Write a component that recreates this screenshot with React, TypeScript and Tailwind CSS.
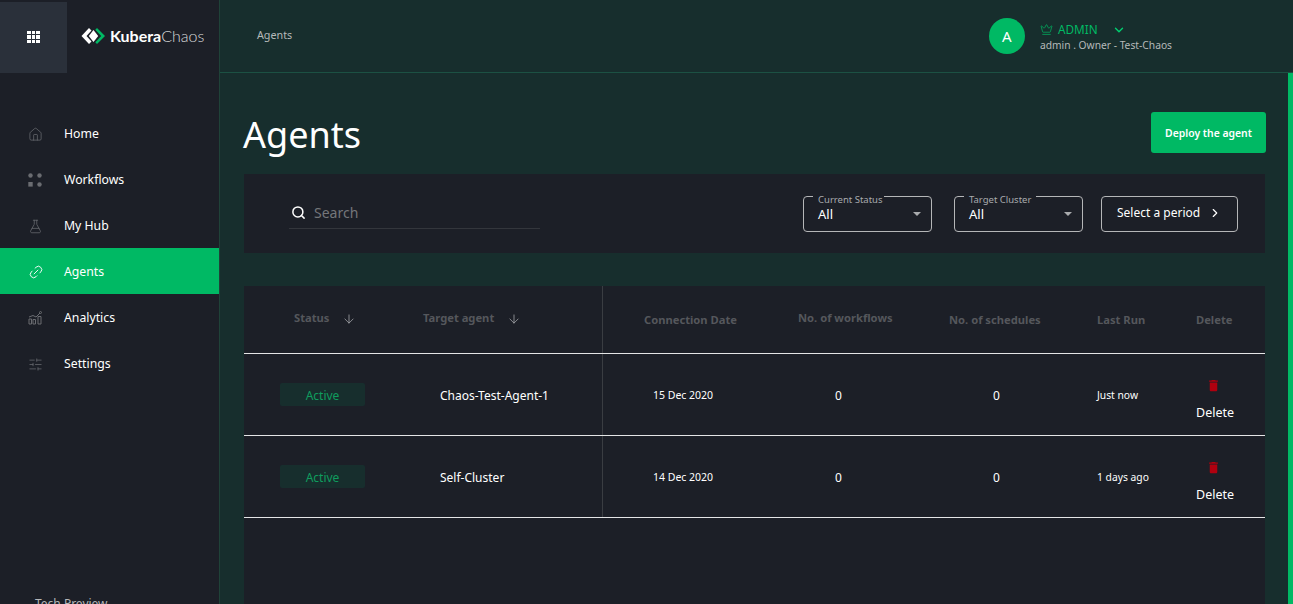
import { ArrowDown, ChevronDown, ChevronRight, Crown, FlaskConical, House, Link2, Search, SlidersHorizontal } from "lucide-react";
import { MdDelete } from "react-icons/md";

const font = { fontFamily: '"Noto Sans", sans-serif' };

function WorkflowsIcon() {
  return (
    <svg width="14" height="14" viewBox="0 0 14 14" fill="#6a6c71">
      <circle cx="2.5" cy="2.5" r="2.2" />
      <circle cx="11.5" cy="2.5" r="2.2" />
      <rect x="0.3" y="9" width="4.4" height="4.6" />
      <circle cx="11.5" cy="11.5" r="2.2" />
    </svg>
  );
}

function AnalyticsIcon() {
  return (
    <svg width="14" height="14" viewBox="0 0 14 14" fill="none" stroke="#6a6c71" strokeWidth="1">
      <path d="M1 13V8h2.5v5zM5 13V8.5h2.5V13zM10 13V5.5h3V13z" />
      <path d="M1 6l4-1.5L8 6l4-4" />
      <circle cx="12.5" cy="1.5" r="1" />
    </svg>
  );
}

function LogoMark() {
  return (
    <svg width="25" height="18" viewBox="0 0 25 18">
      <path d="M8 1 0.5 9 8 17l2.5-2.5L5.5 9l5-5.5z" fill="#fff" />
      <path d="M12.5 3 7.8 9l4.7 6 4.7-6z" fill="#fff" />
      <path d="M16 1l8 8-8 8-1.7-1.8L20.2 9l-5.9-6.2z" fill="#00b964" />
    </svg>
  );
}

const navItems = [
  { label: "Home", icon: <House size={15} color="#6a6c71" strokeWidth={1.2} /> },
  { label: "Workflows", icon: <WorkflowsIcon /> },
  { label: "My Hub", icon: <FlaskConical size={15} color="#6a6c71" strokeWidth={1.2} /> },
  { label: "Agents", icon: <Link2 size={16} color="#fff" strokeWidth={1.3} className="-rotate-45" />, active: true },
  { label: "Analytics", icon: <AnalyticsIcon /> },
  { label: "Settings", icon: <SlidersHorizontal size={15} color="#6a6c71" strokeWidth={1.2} /> },
];

const agents = [
  { name: "Chaos-Test-Agent-1", date: "15 Dec 2020", lastRun: "Just now" },
  { name: "Self-Cluster", date: "14 Dec 2020", lastRun: "1 days ago" },
];

const gridCols = "grid grid-cols-[160px_199px_165px_152px_155px_100px_1fr]";

function SelectBox({ label, notch }: { label: string; notch: string }) {
  return (
    <div className="relative w-[129px] h-[36px] border border-[#b5b6b8] rounded-[4px] pl-[14px] pr-[10px] pt-[8px] flex justify-between">
      <span className={`absolute top-[-1px] left-[9px] h-[2px] bg-[#1c1f27] ${notch}`} />
      <span className="absolute top-[-4px] left-[14px] text-[9.5px] leading-[14px] text-[#a9abae]">{label}</span>
      <span className="text-[13px] leading-[18px] text-white">All</span>
      <span className="mt-[7px] w-0 h-0 border-x-[4px] border-x-transparent border-t-[4px] border-t-[#a9abae]" />
    </div>
  );
}

export default function App() {
  return (
    <div style={font} className="flex h-[604px] overflow-hidden bg-[#172e2d]">
      {/* sidebar */}
      <aside className="w-[220px] shrink-0 h-full bg-[#1c1f27] border-r border-[#1f4238] flex flex-col overflow-hidden">
        <div className="flex items-center shrink-0 h-[71px] mt-[2px]">
          <div className="w-[67px] h-full bg-[#2a303a] flex items-center justify-center">
            <div className="grid grid-cols-3 gap-[1px] -mt-[1px]">
              {Array.from({ length: 9 }).map((_, i) => (
                <span key={i} className="w-[3.5px] h-[3.5px] bg-white" />
              ))}
            </div>
          </div>
          <div className="ml-[14px] -mt-[3px] flex items-center">
            <LogoMark />
            <span style={{ fontFamily: "Lato, sans-serif" }} className="ml-[4px] text-[16px] font-bold text-white">Kubera</span>
            <span style={{ fontFamily: "Lato, sans-serif" }} className="text-[16px] font-light text-[#d8d9da]">Chaos</span>
          </div>
        </div>
        <nav className="mt-[37px] shrink-0">
          {navItems.map((item) => (
            <div
              key={item.label}
              className={`flex items-center h-[46px] pl-[28px] pt-[2px] text-[12.25px] text-white ${item.active ? "bg-[#00b964]" : ""}`}
            >
              <span className="w-[36px] flex items-center">{item.icon}</span>
              {item.label}
            </div>
          ))}
        </nav>
        <div className="mt-[210px] shrink-0 pl-[35px] text-[12px] leading-[16px] text-[#b5b6b8] whitespace-nowrap">Tech Preview</div>
      </aside>

      <div className="flex-1 flex flex-col min-w-0">
        {/* top bar */}
        <header className="h-[73px] shrink-0 border-b border-[#1c5143] flex items-center pl-[37px] pr-[121px] justify-between">
          <span className="text-[10.75px] mb-[2px] text-[#b5b9b9]">Agents</span>
          <div className="flex items-center">
            <div className="w-[36px] h-[36px] rounded-full bg-[#00b964] flex items-center justify-center text-white text-[15px]">A</div>
            <div className="ml-[15px] mt-[2px]">
              <div className="flex items-center text-[11.75px] leading-[17px] text-[#00b964]">
                <Crown size={13} strokeWidth={1.3} />
                <span className="ml-[5px]">ADMIN</span>
                <ChevronDown size={14} strokeWidth={2.4} className="ml-[14px] text-[#00d070]" />
              </div>
              <div className="text-[10.25px] leading-[15px] text-[#b5b9b9]">admin . Owner - Test-Chaos</div>
            </div>
          </div>
        </header>

        <div className="flex flex-1 min-h-0">
          <main className="flex-1 min-w-0 pl-[24px] pr-[23px]">
            <div className="flex items-start justify-between pt-[39px]">
              <h1 className="text-[36px] leading-[45px] text-white -ml-[1px]">Agents</h1>
              <button className="w-[115px] h-[41px] -mr-[1px] pt-[2px] bg-[#00b964] rounded-[3px] text-white text-[10.4px] font-semibold">Deploy the agent</button>
            </div>

            {/* filters */}
            <section className="mt-[17px] h-[79px] bg-[#1c1f27] flex items-center pl-[45px] pr-[27px]">
              <div className="w-[251px] h-[33px] mt-[-3px] border-b border-[#33363c] flex items-center pl-[2px] pt-[2px]">
                <Search size={15} color="#fff" strokeWidth={2.4} />
                <span className="ml-[8px] text-[14px] text-[#74767a]">Search</span>
              </div>
              <div className="ml-auto flex items-center">
                <SelectBox label="Current Status" notch="w-[71px]" />
                <div className="w-[22px]" />
                <SelectBox label="Target Cluster" notch="w-[72px]" />
                <button className="ml-[18px] w-[137px] h-[36px] pb-[1px] border border-[#b5b6b8] rounded-[4px] flex items-center pl-[15px] text-[12px] text-white">
                  Select a period
                  <ChevronRight size={14} strokeWidth={2} className="ml-[8px]" />
                </button>
              </div>
            </section>

            {/* table */}
            <section className="mt-[33px] bg-[#1c1f27] h-[400px] relative">
              <div className={`${gridCols} h-[68px] border-b border-[#e4e5e6] text-[11.2px] font-bold text-[#55575c]`}>
                <div className="pl-[50px] pt-[24px] flex items-start">
                  Status
                  <ArrowDown size={14} strokeWidth={1.3} className="ml-[13px] mt-[2px] text-[#a9abae]" />
                </div>
                <div className="pl-[19px] pt-[24px] flex items-start border-r border-[#3a3d42]">
                  Target agent
                  <ArrowDown size={14} strokeWidth={1.3} className="ml-[13px] mt-[2px] text-[#a9abae]" />
                </div>
                <div className="pl-[41px] pt-[26px]">Connection Date</div>
                <div className="pl-[30px] pt-[24px]">No. of workflows</div>
                <div className="pl-[29px] pt-[26px]">No. of schedules</div>
                <div className="pl-[22px] pt-[26px]">Last Run</div>
                <div className="pl-[21px] pt-[26px]">Delete</div>
              </div>
              {agents.map((agent) => (
                <div key={agent.name} className={`${gridCols} h-[82px] border-b border-[#e4e5e6] items-stretch text-white`}>
                  <div className="pl-[36px] flex items-center">
                    <span className="w-[85px] h-[23px] pt-[2px] rounded-[2px] bg-[#172e2d] text-[#0f9d5e] text-[12px] flex items-center justify-center">Active</span>
                  </div>
                  <div className="pl-[36px] pt-[2px] flex items-center text-[12px] border-r border-[#3a3d42]">{agent.name}</div>
                  <div className="pl-[50px] pt-[2px] flex items-center text-[10.5px]">{agent.date}</div>
                  <div className="pl-[67px] pt-[2px] flex items-center text-[12px]">0</div>
                  <div className="pl-[73px] pt-[2px] flex items-center text-[12px]">0</div>
                  <div className="pl-[22px] pt-[2px] flex items-center text-[10.3px]">{agent.lastRun}</div>
                  <div className="pl-[21px] pt-[24px]">
                    <MdDelete size={15} color="#b0000f" className="ml-[10px]" />
                    <div className="mt-[12px] text-[12.5px] leading-[16px]">Delete</div>
                  </div>
                </div>
              ))}
            </section>
          </main>
          {/* scrollbar */}
          <div className="w-[5px] shrink-0 bg-[#00b964]" />
        </div>
      </div>
    </div>
  );
}
